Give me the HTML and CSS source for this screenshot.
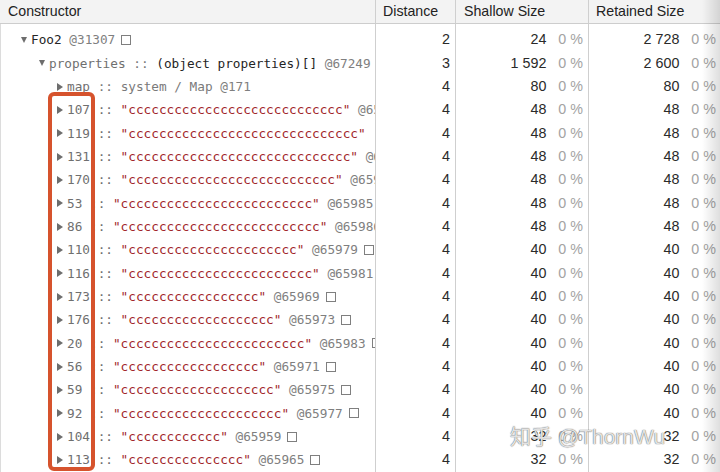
FILE: index.html
```html
<!DOCTYPE html>
<html>
<head>
<meta charset="utf-8">
<link rel="stylesheet" href="styles.css">
</head>
<body>
<div class="panel">
  <div class="row head">
    <div class="cell c1">Constructor</div>
    <div class="cell c2">Distance</div>
    <div class="cell c3">Shallow Size</div>
    <div class="cell c4">Retained Size</div>
  </div>

  <div class="row first">
    <div class="cell c1 tree l1"><span class="tri down"></span><span class="dark">Foo2</span>&nbsp;<span class="id">@31307</span><span class="sq"></span></div>
    <div class="cell c2 num">2</div>
    <div class="cell c3 num"><span>24</span><span class="pct">0 %</span></div>
    <div class="cell c4 num"><span>2 728</span><span class="pct">0 %</span></div>
  </div>
  <div class="row">
    <div class="cell c1 tree l2"><span class="tri down"></span><span class="name">properties</span>&nbsp;<span class="sep">::</span>&nbsp;<span class="dark">(object properties)[]</span>&nbsp;<span class="id">@67249</span></div>
    <div class="cell c2 num">3</div>
    <div class="cell c3 num"><span>1 592</span><span class="pct">0 %</span></div>
    <div class="cell c4 num"><span>2 600</span><span class="pct">0 %</span></div>
  </div>
  <div class="row">
    <div class="cell c1 tree l3"><span class="tri"></span><span class="name">map</span>&nbsp;<span class="sep">::</span>&nbsp;<span class="sys">system / Map</span>&nbsp;<span class="id">@171</span></div>
    <div class="cell c2 num">4</div>
    <div class="cell c3 num"><span>80</span><span class="pct">0 %</span></div>
    <div class="cell c4 num"><span>80</span><span class="pct">0 %</span></div>
  </div>

  <div class="row"><div class="cell c1 tree l3"><span class="tri"></span><span class="name">107&nbsp;::&nbsp;</span><span class="str">"cccccccccccccccccccccccccccc"</span>&nbsp;<span class="id">@65987</span></div><div class="cell c2 num">4</div><div class="cell c3 num"><span>48</span><span class="pct">0 %</span></div><div class="cell c4 num"><span>48</span><span class="pct">0 %</span></div></div>
  <div class="row"><div class="cell c1 tree l3"><span class="tri"></span><span class="name">119&nbsp;::&nbsp;</span><span class="str">"cccccccccccccccccccccccccccccc"</span>&nbsp;&nbsp;<span class="id">@65989</span></div><div class="cell c2 num">4</div><div class="cell c3 num"><span>48</span><span class="pct">0 %</span></div><div class="cell c4 num"><span>48</span><span class="pct">0 %</span></div></div>
  <div class="row"><div class="cell c1 tree l3"><span class="tri"></span><span class="name">131&nbsp;::&nbsp;</span><span class="str">"ccccccccccccccccccccccccccccc"</span>&nbsp;<span class="id">@65991</span></div><div class="cell c2 num">4</div><div class="cell c3 num"><span>48</span><span class="pct">0 %</span></div><div class="cell c4 num"><span>48</span><span class="pct">0 %</span></div></div>
  <div class="row"><div class="cell c1 tree l3"><span class="tri"></span><span class="name">170&nbsp;::&nbsp;</span><span class="str">"ccccccccccccccccccccccccccc"</span>&nbsp;<span class="id">@65993</span></div><div class="cell c2 num">4</div><div class="cell c3 num"><span>48</span><span class="pct">0 %</span></div><div class="cell c4 num"><span>48</span><span class="pct">0 %</span></div></div>
  <div class="row"><div class="cell c1 tree l3"><span class="tri"></span><span class="name">53&nbsp;::&nbsp;</span><span class="str">"ccccccccccccccccccccccccc"</span>&nbsp;<span class="id">@65985</span></div><div class="cell c2 num">4</div><div class="cell c3 num"><span>48</span><span class="pct">0 %</span></div><div class="cell c4 num"><span>48</span><span class="pct">0 %</span></div></div>
  <div class="row"><div class="cell c1 tree l3"><span class="tri"></span><span class="name">86&nbsp;::&nbsp;</span><span class="str">"cccccccccccccccccccccccccc"</span>&nbsp;<span class="id">@65986</span></div><div class="cell c2 num">4</div><div class="cell c3 num"><span>48</span><span class="pct">0 %</span></div><div class="cell c4 num"><span>48</span><span class="pct">0 %</span></div></div>
  <div class="row"><div class="cell c1 tree l3"><span class="tri"></span><span class="name">110&nbsp;::&nbsp;</span><span class="str">"cccccccccccccccccccccc"</span>&nbsp;<span class="id">@65979</span><span class="sq"></span></div><div class="cell c2 num">4</div><div class="cell c3 num"><span>40</span><span class="pct">0 %</span></div><div class="cell c4 num"><span>40</span><span class="pct">0 %</span></div></div>
  <div class="row"><div class="cell c1 tree l3"><span class="tri"></span><span class="name">116&nbsp;::&nbsp;</span><span class="str">"cccccccccccccccccccccccc"</span>&nbsp;<span class="id">@65981</span><span class="sq"></span></div><div class="cell c2 num">4</div><div class="cell c3 num"><span>40</span><span class="pct">0 %</span></div><div class="cell c4 num"><span>40</span><span class="pct">0 %</span></div></div>
  <div class="row"><div class="cell c1 tree l3"><span class="tri"></span><span class="name">173&nbsp;::&nbsp;</span><span class="str">"ccccccccccccccccc"</span>&nbsp;<span class="id">@65969</span><span class="sq"></span></div><div class="cell c2 num">4</div><div class="cell c3 num"><span>40</span><span class="pct">0 %</span></div><div class="cell c4 num"><span>40</span><span class="pct">0 %</span></div></div>
  <div class="row"><div class="cell c1 tree l3"><span class="tri"></span><span class="name">176&nbsp;::&nbsp;</span><span class="str">"ccccccccccccccccccc"</span>&nbsp;<span class="id">@65973</span><span class="sq"></span></div><div class="cell c2 num">4</div><div class="cell c3 num"><span>40</span><span class="pct">0 %</span></div><div class="cell c4 num"><span>40</span><span class="pct">0 %</span></div></div>
  <div class="row"><div class="cell c1 tree l3"><span class="tri"></span><span class="name">20&nbsp;::&nbsp;</span><span class="str">"cccccccccccccccccccccccc"</span>&nbsp;<span class="id">@65983</span><span class="sq"></span></div><div class="cell c2 num">4</div><div class="cell c3 num"><span>40</span><span class="pct">0 %</span></div><div class="cell c4 num"><span>40</span><span class="pct">0 %</span></div></div>
  <div class="row"><div class="cell c1 tree l3"><span class="tri"></span><span class="name">56&nbsp;::&nbsp;</span><span class="str">"cccccccccccccccccc"</span>&nbsp;<span class="id">@65971</span><span class="sq"></span></div><div class="cell c2 num">4</div><div class="cell c3 num"><span>40</span><span class="pct">0 %</span></div><div class="cell c4 num"><span>40</span><span class="pct">0 %</span></div></div>
  <div class="row"><div class="cell c1 tree l3"><span class="tri"></span><span class="name">59&nbsp;::&nbsp;</span><span class="str">"cccccccccccccccccccc"</span>&nbsp;<span class="id">@65975</span><span class="sq"></span></div><div class="cell c2 num">4</div><div class="cell c3 num"><span>40</span><span class="pct">0 %</span></div><div class="cell c4 num"><span>40</span><span class="pct">0 %</span></div></div>
  <div class="row"><div class="cell c1 tree l3"><span class="tri"></span><span class="name">92&nbsp;::&nbsp;</span><span class="str">"ccccccccccccccccccccc"</span>&nbsp;<span class="id">@65977</span><span class="sq"></span></div><div class="cell c2 num">4</div><div class="cell c3 num"><span>40</span><span class="pct">0 %</span></div><div class="cell c4 num"><span>40</span><span class="pct">0 %</span></div></div>
  <div class="row"><div class="cell c1 tree l3"><span class="tri"></span><span class="name">104&nbsp;::&nbsp;</span><span class="str">"cccccccccccc"</span>&nbsp;<span class="id">@65959</span><span class="sq"></span></div><div class="cell c2 num">4</div><div class="cell c3 num"><span>32</span><span class="pct">0 %</span></div><div class="cell c4 num"><span>32</span><span class="pct">0 %</span></div></div>
  <div class="row"><div class="cell c1 tree l3"><span class="tri"></span><span class="name">113&nbsp;::&nbsp;</span><span class="str">"ccccccccccccccc"</span>&nbsp;<span class="id">@65965</span><span class="sq"></span></div><div class="cell c2 num">4</div><div class="cell c3 num"><span>32</span><span class="pct">0 %</span></div><div class="cell c4 num"><span>32</span><span class="pct">0 %</span></div></div>

  <div class="highlight"></div>
  <div class="edge-shadow"></div>
  <div class="watermark">知乎 @ThornWu</div>
</div>
</body>
</html>
```

FILE: styles.css
```css
html, body {
  margin: 0;
  padding: 0;
  background: #ffffff;
}

.panel {
  position: relative;
  width: 720px;
  height: 472px;
  overflow: hidden;
  background: #ffffff;
}

.row {
  display: grid;
  grid-template-columns: 375px 80px 133px 132px;
  height: 23.333px;
}

.row.first {
  height: 27.667px;
}

.row.first .cell {
  padding-top: 4.333px;
}

.cell {
  box-sizing: border-box;
  line-height: 23.333px;
  white-space: nowrap;
  overflow: hidden;
}

.c1 {
  border-left: 1px solid #dcdcdc;
}

.c2, .c3, .c4 {
  border-left: 1px solid #cfcfcf;
}

.head {
  height: 24px;
  background: #f3f3f3;
  border-bottom: 1px solid #cdcdcd;
  box-sizing: border-box;
}

.head .cell {
  font-family: "Liberation Sans", Arial, sans-serif;
  font-size: 14.2px;
  color: #222222;
  line-height: 23px;
  padding-left: 7px;
}

.head .c1 {
  border-left-color: #f3f3f3;
}

.head .c3 {
  padding-left: 8px;
}

/* tree column */
.tree {
  display: flex;
  align-items: center;
  font-family: "DejaVu Sans Mono", "Liberation Mono", monospace;
  font-size: 12.72px;
  color: #7a7a7a;
}

.l1 { padding-left: 20px; }
.l2 { padding-left: 38px; }
.l3 { padding-left: 56px; }

.tri {
  flex: none;
  width: 10px;
  height: 8px;
  display: flex;
  align-items: center;
}

.tri::before {
  content: "";
  display: block;
  border-top: 4px solid transparent;
  border-bottom: 4px solid transparent;
  border-left: 6px solid #6d6d6d;
}

.tri.down::before {
  border-left: 3.5px solid transparent;
  border-right: 3.5px solid transparent;
  border-top: 6px solid #6d6d6d;
  border-bottom: 0;
}

.dark { color: #252525; }
.name { color: #6f6f6f; }
.sep { color: #7a7a7a; }
.sys { color: #7a7a7a; }
.id { color: #7f7f7f; }
.str { color: #a1262a; }

.sq {
  flex: none;
  display: inline-block;
  width: 8px;
  height: 8px;
  border: 1px solid #7f7f7f;
  margin-left: 6px;
}

/* number columns */
.num {
  display: flex;
  justify-content: flex-end;
  align-items: center;
  font-family: "Liberation Sans", Arial, sans-serif;
  font-size: 14.3px;
  color: #2a2a2a;
  padding-right: 5px;
}

.c4.num {
  padding-right: 4px;
}

.pct {
  color: #a3a3a3;
  margin-left: 12px;
}

/* overlays */
.highlight {
  position: absolute;
  left: 48px;
  top: 92px;
  width: 47px;
  height: 379px;
  box-sizing: border-box;
  border: 4px solid #d6532d;
  border-radius: 6px;
  pointer-events: none;
}

.edge-shadow {
  position: absolute;
  top: 0;
  right: 0;
  width: 18px;
  height: 100%;
  background: linear-gradient(to right, rgba(0, 0, 0, 0), rgba(0, 0, 0, 0.13));
  pointer-events: none;
}

.watermark {
  position: absolute;
  left: 510px;
  top: 424px;
  font-family: "Liberation Sans", "Noto Sans CJK SC", sans-serif;
  font-size: 21px;
  line-height: 26px;
  color: rgba(255, 255, 255, 0.82);
  text-shadow: 0 0 1px rgba(90, 90, 90, 0.8), 0 0 1px rgba(90, 90, 90, 0.8);
  white-space: nowrap;
  pointer-events: none;
}
```
